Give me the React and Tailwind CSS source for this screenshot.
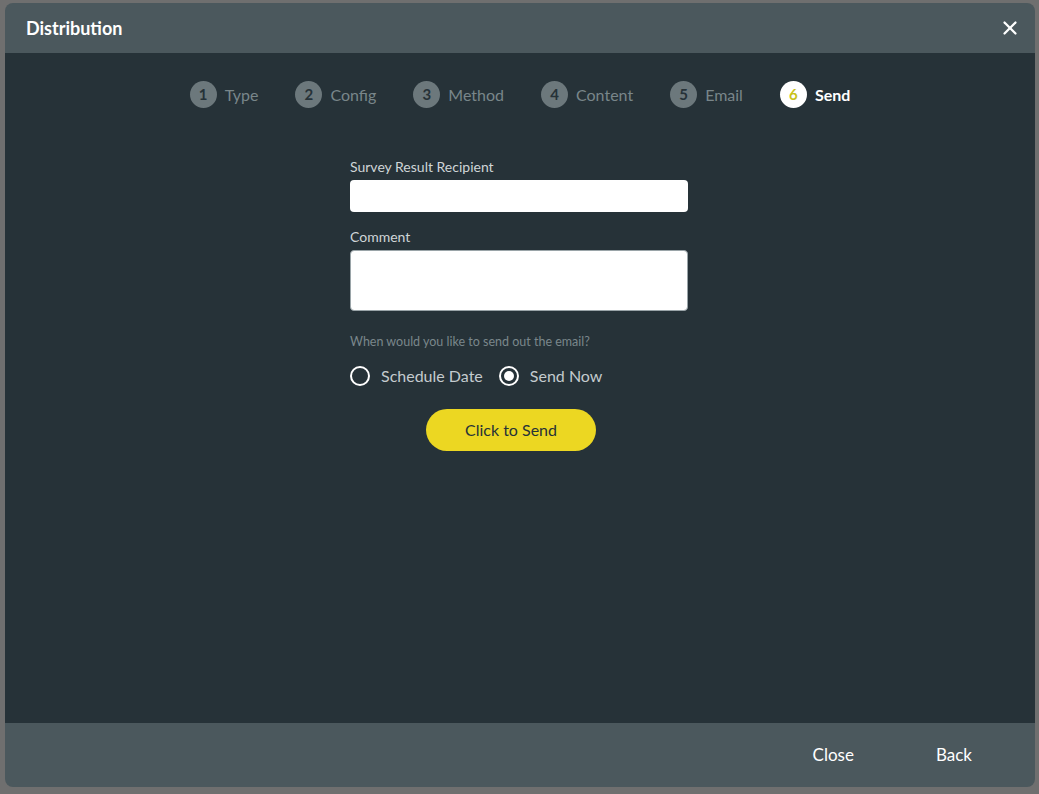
import { X } from 'lucide-react';

const STEPS = ['Type', 'Config', 'Method', 'Content', 'Email', 'Send'];

const Step = ({ n, label, active }) => (
  <div className="flex items-center gap-[8px]">
    <span
      className={`flex h-[27px] w-[27px] items-center justify-center rounded-full text-[15px] font-bold ${
        active ? 'bg-white text-[#c9c21a]' : 'bg-[#6c787c] text-[#263238]'
      }`}
    >
      {n}
    </span>
    <span className={`text-[16px] ${active ? 'font-bold text-white' : 'text-[#79868a]'}`}>{label}</span>
  </div>
);

const Radio = ({ label, checked }) => (
  <label className="flex items-center gap-[11px]">
    <span className="flex h-[20px] w-[20px] items-center justify-center rounded-full border-2 border-white">
      {checked && <span className="h-[10px] w-[10px] rounded-full bg-white" />}
    </span>
    <span className="text-[16px] text-[#c4cbce]">{label}</span>
  </label>
);

export default function App() {
  return (
    <div
      className="h-[794px] w-full bg-[#6f6f6f] pt-[3px] pb-[7px] pl-[5px] pr-[4px]"
      style={{ fontFamily: 'Lato, "Open Sans", sans-serif' }}
    >
      <div className="flex h-full flex-col overflow-hidden rounded-[8px]">
        {/* Header */}
        <div className="flex h-[50px] items-center justify-between bg-[#4b585d] pl-[21px] pr-[14px]">
          <h1 className="text-[18px] font-bold text-white">Distribution</h1>
          <X className="h-[22px] w-[22px] text-white" strokeWidth={2.5} />
        </div>

        {/* Body */}
        <div className="flex flex-1 flex-col items-center bg-[#263238] pt-[28px]">
          <div className="flex items-center gap-[37px]">
            {STEPS.map((s, i) => (
              <Step key={s} n={i + 1} label={s} active={i === 5} />
            ))}
          </div>

          <div className="mr-[2px] mt-[48px] flex w-[338px] flex-col">
            <label className="text-[14px] text-[#cfd5d7]">Survey Result Recipient</label>
            <input className="mt-[3px] h-[32px] rounded-[4px] bg-white px-2 outline-none" />

            <label className="mt-[14px] text-[14px] text-[#cfd5d7]">Comment</label>
            <textarea className="mt-[3px] h-[61px] resize-none rounded-[4px] border border-[#9aa4a8] bg-white px-2 outline-none" />

            <p className="mt-[22px] text-[12.5px] text-[#7a878b]">When would you like to send out the email?</p>

            <div className="mt-[12px] flex items-center gap-[16px]">
              <Radio label="Schedule Date" />
              <Radio label="Send Now" checked />
            </div>

            <button className="ml-[76px] mt-[21px] h-[42px] w-[170px] rounded-full bg-[#ecd722] text-[16px] text-[#263238]">
              Click to Send
            </button>
          </div>
        </div>

        {/* Footer */}
        <div className="flex h-[64px] items-center justify-end gap-[82px] bg-[#4b585d] pr-[63px]">
          <button className="text-[17px] text-white">Close</button>
          <button className="text-[17px] text-white">Back</button>
        </div>
      </div>
    </div>
  );
}
